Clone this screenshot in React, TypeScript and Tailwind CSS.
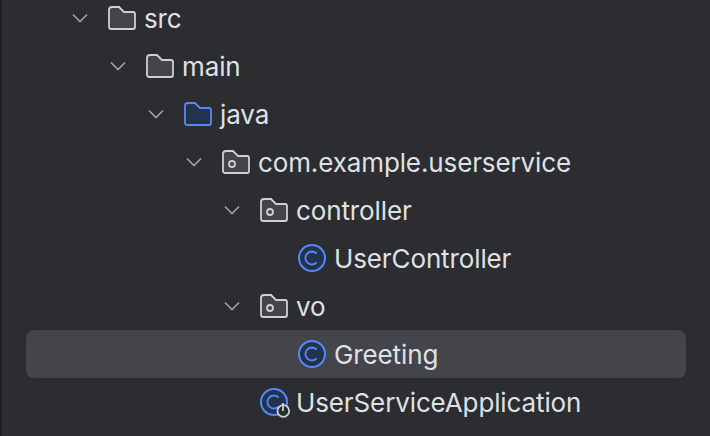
import type { ReactNode } from 'react';

function Chevron() {
  return (
    <svg width="16" height="10" viewBox="0 0 16 10" fill="none" className="shrink-0">
      <path d="M1 1.5L8 8.5L15 1.5" stroke="#9da0a8" strokeWidth="1.7" />
    </svg>
  );
}

const folderPath = 'M1 6A3 3 0 0 1 4 3H11L16 8H25A2 2 0 0 1 27 10V23A2 2 0 0 1 25 25H3A2 2 0 0 1 1 23Z';

function Folder({ blue, dot }: { blue?: boolean; dot?: boolean }) {
  return (
    <svg width="28" height="28" viewBox="0 0 28 28" fill={blue ? '#25324d' : '#43454a'} className="shrink-0">
      <path d={folderPath} stroke={blue ? '#548af7' : '#ced0d6'} strokeWidth="1.8" />
      {dot && <circle cx="10" cy="16" r="3" fill="none" stroke="#ced0d6" strokeWidth="1.8" />}
    </svg>
  );
}

function ClassIcon({ run }: { run?: boolean }) {
  return (
    <svg width="30" height="30" viewBox="0 0 30 30" fill="none" className="shrink-0 overflow-visible mr-[7px]">
      <circle cx="15" cy="15" r="13" fill="#25324d" stroke="#548af7" strokeWidth="2" />
      <path d="M19.7 10.6A6.5 6.5 0 1 0 19.7 19.4" stroke="#548af7" strokeWidth="1.8" />
      {run && (
        <>
          <circle cx="24.3" cy="24" r="5.8" fill="#2b2d30" stroke="#ced0d6" strokeWidth="1.8" />
          <path d="M24 16V24" stroke="#ced0d6" strokeWidth="1.8" />
        </>
      )}
    </svg>
  );
}

function Row({ indent, chevron, icon, label, selected }: { indent: string; chevron?: boolean; icon: ReactNode; label: string; selected?: boolean }) {
  return (
    <div className={`h-12 flex items-center rounded-lg ${indent} ${selected ? 'bg-[#43454a]' : ''}`}>
      <div className="w-[36px] flex shrink-0 justify-start">{chevron && <Chevron />}</div>
      <div className="min-w-[36px] shrink-0 flex items-center">{icon}</div>
      <span className="mt-0.5 text-[26px] leading-none tracking-[-0.12px] text-[#dfe1e5] whitespace-nowrap">{label}</span>
    </div>
  );
}

export default function App() {
  return (
    <div className="w-[710px] h-[436px] overflow-hidden bg-[#2b2d30] font-['Inter',sans-serif] border-l-2 border-[#1e1f22]">
      <div className="ml-6 mr-[24px] mt-[-6px]">
        <Row indent="pl-[46px]" chevron icon={<Folder />} label="src" />
        <Row indent="pl-[84px]" chevron icon={<Folder />} label="main" />
        <Row indent="pl-[122px]" chevron icon={<Folder blue />} label="java" />
        <Row indent="pl-[160px]" chevron icon={<Folder dot />} label="com.example.userservice" />
        <Row indent="pl-[198px]" chevron icon={<Folder dot />} label="controller" />
        <Row indent="pl-[235px]" icon={<ClassIcon />} label="UserController" />
        <Row indent="pl-[198px]" chevron icon={<Folder dot />} label="vo" />
        <Row indent="pl-[235px]" icon={<ClassIcon />} label="Greeting" selected />
        <Row indent="pl-[197px]" icon={<ClassIcon run />} label="UserServiceApplication" />
      </div>
    </div>
  );
}
